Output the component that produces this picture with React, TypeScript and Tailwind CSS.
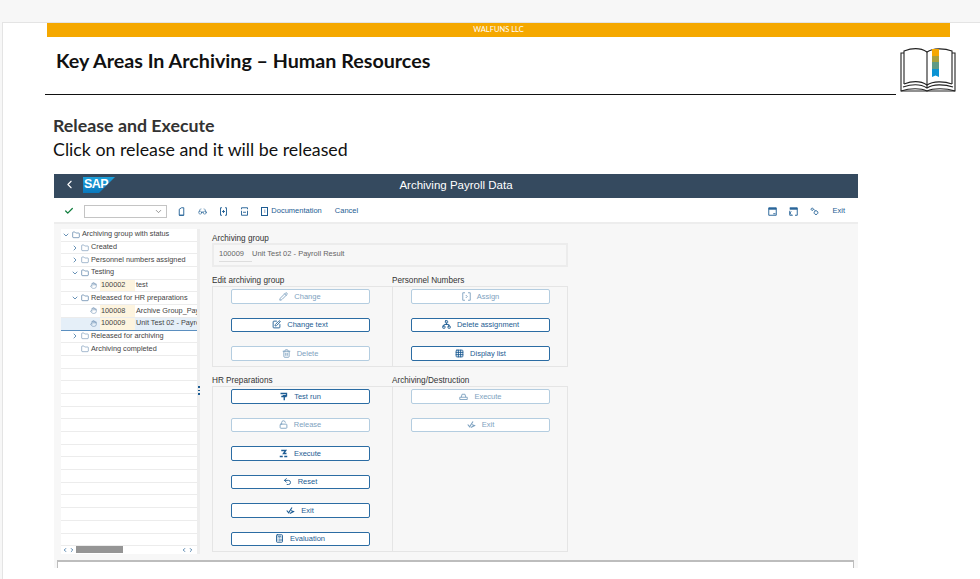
import { Check, ChevronDown, ChevronLeft, ChevronRight, Folder, Glasses, Hand, Pencil, Trash2, Network, Grid3x3, Undo2, Calculator, LockOpen, SquarePen } from "lucide-react";
import type { ReactNode } from "react";

const blue = "#1d5c93";
const faded = "#7ea2c0";

function BookIcon() {
  return (
    <svg width="56" height="46" viewBox="0 0 56 46" fill="none" stroke="#222" strokeWidth="1.1">
      <path d="M4 6H1v38h54V6h-3" />
      <path d="M4 37V4c8-3 17-3 23 1 6-4 17-4 25-1v33" />
      <path d="M27 5v36" />
      <path d="M4 37c8-3 17-3 23 1 6-4 17-4 25-1" />
      <path d="M3 40c9-3 18-3 24 1 6-4 17-4 26-1" />
      <path d="M1 44c9-3 20-3 26 0 6-3 19-3 28 0" />
      <rect x="32" y="2" width="7" height="7" fill="#f5a800" stroke="none" />
      <rect x="32" y="9" width="7" height="6" fill="#a9a13c" stroke="none" />
      <rect x="32" y="15" width="7" height="7" fill="#5f9b86" stroke="none" />
      <path d="M32 22h7v8l-3.500-1.500-3.500 1.500z" fill="#0b93d3" stroke="none" />
    </svg>
  );
}

function SapLogo() {
  return (
    <div className="h-[16px] w-[32px] bg-[linear-gradient(#1ea2dc,#0a78bd)] [clip-path:polygon(0_0,100%_0,50%_100%,0_100%)] pl-[1px] text-[12.500px] leading-[15px] font-bold tracking-[-0.5px] text-white font-['Liberation_Sans',sans-serif]">
      SAP
    </div>
  );
}

// small SAP glyphs that lucide has no match for
function Glyph({ d, color = blue, size = 9, width = 1.2 }: { d: string; color?: string; size?: number; width?: number }) {
  return (
    <svg width={size} height={size} viewBox="0 0 12 12" fill="none" stroke={color} strokeWidth={width}>
      <path d={d} />
    </svg>
  );
}

const glyphs = {
  doc: "M3 11V3l3-2h3v10zM3 11h6",
  bracketPlus: "M4 1H2v10h2M8 1h2v10H8M6 4v4M4 6h4",
  bracketMinus: "M2 3V1h8v2M2 5v6h8V5M4 7h4",
  testRun: "M2 2h8v3H5M3 6h7M7 5v6",
  execute: "M3 2h6L6 6h4M1 10h4M7 10h4",
  exit: "M1 6l2.500 3L8 2M5 10l6-3M7 6l3 2",
  assign: "M4 1H1v10h3M8 1h3v10H8M5 4l2 2-2 2",
  car: "M1 7h10v3H1zM3 7l1-4h4l1 4",
  winBottom: "M1 1h10v10H1zM1 2h10M1 3h10M7 9h3",
  winBack: "M1 1h10v10H8M1 2h10M1 3h10M1 5v6h4M3 6L1 8l2 2",
  gears: "M3 1.500a1.500 1.500 0 1 0 .01 0M8 5a2.500 2.500 0 1 0 .01 0M5 3l2 2",
};

function TreeRow({ depth = 0, arrow, icon, label, code, selected, text }: { depth?: number; arrow?: "open" | "closed"; icon: ReactNode; label?: string; code?: string; selected?: boolean; text?: string }) {
  return (
    <div className={`flex h-[12.700px] shrink-0 items-center overflow-hidden border-b whitespace-nowrap ${selected ? "border-[#5b8fc0] bg-[#e5eff8]" : "border-[#ececec]"}`}>
      <span className="flex w-[10px] shrink-0 justify-center" style={{ marginLeft: depth }}>
        {arrow === "open" && <ChevronDown size={8} color={blue} />}
        {arrow === "closed" && <ChevronRight size={8} color={blue} />}
      </span>
      <span className="mr-[2px] flex w-[9px] shrink-0 justify-center">{icon}</span>
      {code ? (
        <>
          <span className="flex h-full w-[35px] shrink-0 items-center bg-[#fdf4df] pl-[1px]">{code}</span>
          <span className="ml-[1px]">{text}</span>
        </>
      ) : (
        <span>{label}</span>
      )}
    </div>
  );
}

function SapButton({ icon, label, disabled }: { icon: ReactNode; label: string; disabled?: boolean }) {
  return (
    <div className={`flex h-[14.500px] w-[139px] shrink-0 items-center justify-center gap-[6px] rounded-[2px] border bg-white text-[7.500px] ${disabled ? "border-[#b4cde0] text-[#7ea2c0]" : "border-[#2b6ca3] border-b-[1.500px] text-[#1d5c93]"}`}>
      {icon}
      <span>{label}</span>
    </div>
  );
}

const ic = (disabled?: boolean) => ({ size: 9, color: disabled ? faded : blue, strokeWidth: 2.4 });

export default function App() {
  const folder = <Folder size={8} color="#4d77a0" strokeWidth={1.5} />;
  const group = <Folder size={8} color="#4d77a0" strokeWidth={2} />;
  const hand = <Hand size={7} color="#4d77a0" strokeWidth={1.5} />;

  return (
    <div className="h-[579px] w-[980px] overflow-hidden bg-[#f7f7f7] font-['Lato','Noto_Sans',sans-serif]">
      <div className="mt-[22px] ml-[2px] h-[557px] border-t border-l border-[#e4e4e4] bg-white pl-[44px]">
        <div className="flex h-[14px] w-[903px] items-center justify-center bg-[#f5a800] text-[7.500px] text-white">WALFUNS LLC</div>
        <div className="flex items-start">
          <div className="-ml-[2px] w-[851px]">
            <h1 className="mt-[12px] ml-[11px] text-[19.700px] leading-[24px] font-bold text-[#111]">Key Areas In Archiving – Human Resources</h1>
            <div className="mt-[21px] h-[1px] bg-[#111]" />
          </div>
          <div className="mt-[10px] ml-[4px]"><BookIcon /></div>
        </div>
        <div className="mt-[18px] ml-[6px]">
          <h2 className="text-[17.800px] leading-[24px] font-bold text-[#333]">Release and Execute</h2>
          <p className="text-[17.800px] leading-[24px] text-[#111]">Click on release and it will be released</p>
        </div>

        <div className="mt-[13px] ml-[7px] h-[394px] w-[804px] bg-[#f7f7f7] text-[#32363a] font-['Liberation_Sans',sans-serif]">
          <div className="relative flex h-[24px] items-center justify-center bg-[#354a5f] text-[11.500px] text-white">
            <div className="absolute top-[3px] left-[9px] flex items-start gap-[7px]">
              <ChevronLeft size={13} color="#fff" className="mt-[1px]" />
              <SapLogo />
            </div>
            Archiving Payroll Data
          </div>

          <div className="flex h-[26px] items-center justify-between border-b-2 border-[#ededed] bg-white pt-[2px] pr-[13px] pl-[10px] text-[7.500px] text-[#1d5c93]">
            <div className="flex items-center">
              <Check size={10} color="#107e3e" strokeWidth={3} />
              <div className="ml-[10px] flex h-[13px] w-[83px] items-center justify-end border border-[#c4c4c4] pr-[3px]"><ChevronDown size={9} color="#777" /></div>
              <div className="ml-[10px] flex items-center gap-[12px]">
                <Glyph d={glyphs.doc} />
                <Glasses size={9} strokeWidth={1.5} />
                <Glyph d={glyphs.bracketPlus} />
                <Glyph d={glyphs.bracketMinus} />
              </div>
              <span className="ml-[12px] flex items-center gap-[3px]"><span className="border border-[#1d5c93] px-[2px] text-[6px] leading-[7px]">i</span>Documentation</span>
              <span className="ml-[13px]">Cancel</span>
            </div>
            <div className="flex items-center gap-[12px]">
              <Glyph d={glyphs.winBottom} />
              <Glyph d={glyphs.winBack} />
              <Glyph d={glyphs.gears} />
              <span className="ml-[1px]">Exit</span>
            </div>
          </div>

          <div className="flex h-[336px]">
            <div className="mt-[5px] ml-[7px] flex h-[325px] w-[139px] shrink-0 flex-col border-r-[3px] border-[#eeeeee] bg-white text-[7.300px] text-[#444]">
              <TreeRow arrow="open" icon={group} label="Archiving group with status" />
              <TreeRow depth={9} arrow="closed" icon={folder} label="Created" />
              <TreeRow depth={9} arrow="closed" icon={folder} label="Personnel numbers assigned" />
              <TreeRow depth={9} arrow="open" icon={group} label="Testing" />
              <TreeRow depth={18} icon={hand} code="100002" text="test" />
              <TreeRow depth={9} arrow="open" icon={group} label="Released for HR preparations" />
              <TreeRow depth={18} icon={hand} code="100008" text="Archive Group_Payroll" />
              <TreeRow depth={18} icon={hand} code="100009" text="Unit Test 02 - Payroll" selected />
              <TreeRow depth={9} arrow="closed" icon={folder} label="Released for archiving" />
              <TreeRow depth={9} icon={folder} label="Archiving completed" />
              {Array.from({ length: 15 }, (_, i) => (
                <div key={i} className="h-[12.700px] shrink-0 border-b border-[#ececec]" />
              ))}
              <div className="flex h-[7px] shrink-0 items-center bg-white pr-[3px] pl-[1px] text-[#1d5c93]">
                <ChevronLeft size={6} strokeWidth={3} /><ChevronRight size={6} strokeWidth={3} className="ml-[1px]" />
                <div className="ml-[1px] h-[7px] w-[47px] bg-[#959595]" />
                <ChevronLeft size={6} strokeWidth={3} className="ml-auto" /><ChevronRight size={6} strokeWidth={3} className="ml-[1px]" />
              </div>
            </div>
            <div className="flex w-[12px] shrink-0 flex-col pt-[162px]">
              <div className="-ml-[2px] flex flex-col gap-[2px]">
                <span className="h-[1.500px] w-[1.500px] bg-[#1d5c93]" />
                <span className="h-[1.500px] w-[1.500px] bg-[#1d5c93]" />
                <span className="h-[1.500px] w-[1.500px] bg-[#1d5c93]" />
              </div>
            </div>
            <div className="text-[7.500px]">
              <div className="mt-[9.500px] text-[8.200px] leading-[9px] text-[#333]">Archiving group</div>
              <div className="mt-[0.500px] flex h-[24px] w-[356px] items-start border-2 border-[#ececec] pt-[3px] pl-[5px] text-[#666]">
                <span className="w-[33px] border-b border-[#ddd] pb-[2px]">100009</span>
                <span>Unit Test 02 - Payroll Result</span>
              </div>
              <div className="mt-[8.500px] grid w-[356px] grid-cols-[180px_176px] text-[8.200px] text-[#333]">
                <div className="leading-[9px]">Edit archiving group</div>
                <div className="leading-[9px]">Personnel Numbers</div>
              </div>
              <div className="mt-[1.500px] grid h-[81px] w-[356px] grid-cols-[180px_176px] border border-[#e5e5e5]">
                <div className="flex flex-col gap-[14.100px] border-r border-[#e5e5e5] pt-[2px] pl-[17.500px]">
                  <SapButton disabled label="Change" icon={<Pencil {...ic(true)} />} />
                  <SapButton label="Change text" icon={<SquarePen {...ic()} />} />
                  <SapButton disabled label="Delete" icon={<Trash2 {...ic(true)} />} />
                </div>
                <div className="flex flex-col gap-[14.100px] pt-[2px] pl-[18px]">
                  <SapButton disabled label="Assign" icon={<Glyph d={glyphs.assign} color={faded} />} />
                  <SapButton label="Delete assignment" icon={<Network {...ic()} />} />
                  <SapButton label="Display list" icon={<Grid3x3 {...ic()} />} />
                </div>
              </div>
              <div className="mt-[9px] grid w-[356px] grid-cols-[180px_176px] text-[8.200px] text-[#333]">
                <div className="leading-[9px]">HR Preparations</div>
                <div className="leading-[9px]">Archiving/Destruction</div>
              </div>
              <div className="mt-[1px] grid h-[166px] w-[356px] grid-cols-[180px_176px] border border-[#e5e5e5]">
                <div className="flex flex-col gap-[14px] border-r border-[#e5e5e5] pt-[2px] pl-[17.500px]">
                  <SapButton label="Test run" icon={<Glyph d={glyphs.testRun} width={1.800} />} />
                  <SapButton disabled label="Release" icon={<LockOpen {...ic(true)} />} />
                  <SapButton label="Execute" icon={<Glyph d={glyphs.execute} width={1.800} />} />
                  <SapButton label="Reset" icon={<Undo2 {...ic()} />} />
                  <SapButton label="Exit" icon={<Glyph d={glyphs.exit} width={1.500} />} />
                  <SapButton label="Evaluation" icon={<Calculator {...ic()} />} />
                </div>
                <div className="flex flex-col gap-[14px] pt-[2px] pl-[18px]">
                  <SapButton disabled label="Execute" icon={<Glyph d={glyphs.car} color={faded} />} />
                  <SapButton disabled label="Exit" icon={<Glyph d={glyphs.exit} color={faded} width={1.500} />} />
                </div>
              </div>
            </div>
          </div>
          <div className="ml-[3px] h-[8px] w-[797px] border-x border-t-2 border-[#bdbdbd] bg-white" />
        </div>
      </div>
    </div>
  );
}
